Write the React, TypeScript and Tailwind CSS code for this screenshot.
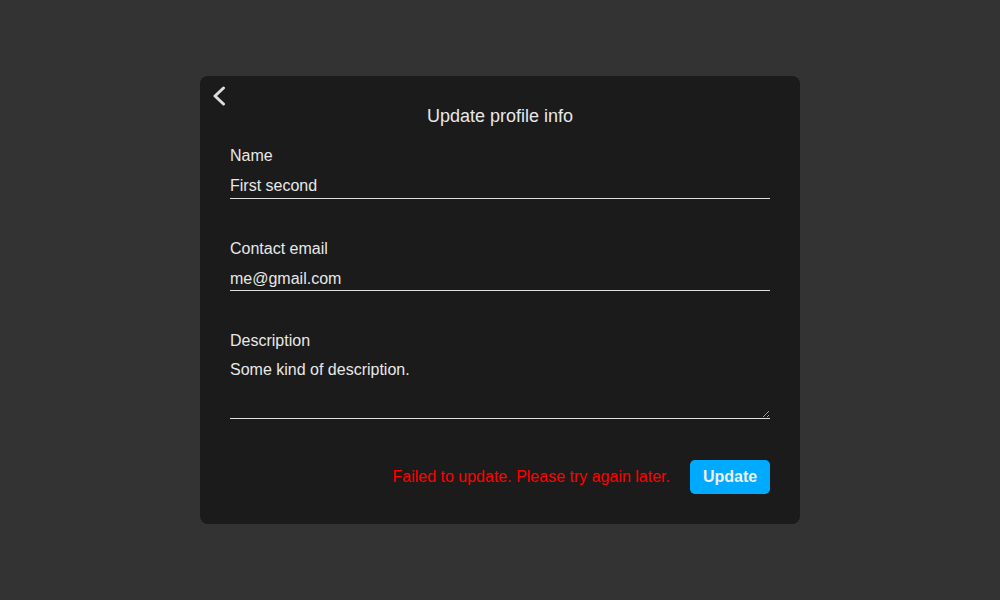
import React from "react";

export default function App() {
  return (
    <div
      className="w-[1000px] h-[600px] bg-[#333333] flex items-start justify-center pt-[76px]"
      style={{ fontFamily: '"Liberation Sans", Arial, sans-serif' }}
    >
      <div className="relative w-[600px] bg-[#1b1b1b] rounded-[8px] px-[30px] pt-[30px] pb-[30px] text-[#e8e8e8]">
        <button className="absolute left-[12px] top-[10px] w-[14px] h-[20px] flex items-center justify-center text-[#dddddd]">
          <svg width="14" height="20" viewBox="0 0 14 20" fill="none">
            <path d="M11.5 2 L3 10 L11.5 18" stroke="currentColor" strokeWidth="3" strokeLinecap="round" strokeLinejoin="round" />
          </svg>
        </button>
        <h1 className="text-center text-[18px] leading-[21px]">Update profile info</h1>

        <div className="mt-[20px] flex flex-col">
          <label className="text-[16px] leading-[18px]">Name</label>
          <input
            className="mt-[10px] h-[24px] pb-[2px] bg-transparent border-b border-[#e0e0e0] text-[16px] leading-[18px] outline-none text-[#e8e8e8]"
            defaultValue="First second"
          />
        </div>

        <div className="mt-[41px] flex flex-col">
          <label className="text-[16px] leading-[18px]">Contact email</label>
          <input
            className="mt-[9px] h-[24px] bg-transparent border-b border-[#e0e0e0] text-[16px] leading-[18px] outline-none text-[#e8e8e8]"
            defaultValue="me@gmail.com"
          />
        </div>

        <div className="mt-[41px] flex flex-col">
          <label className="text-[16px] leading-[18px]">Description</label>
          <textarea
            className="mt-[10px] h-[59px] pt-[1px] bg-transparent border-b border-[#e0e0e0] text-[16px] leading-[18px] outline-none text-[#e8e8e8] resize-y"
            defaultValue="Some kind of description."
          />
        </div>

        <div className="mt-[41px] flex items-center justify-end gap-[20px]">
          <span className="text-[16px] text-[#ff0000]">Failed to update. Please try again later.</span>
          <button className="w-[80px] h-[34px] rounded-[5px] bg-[#00aaff] text-[#f0f0f0] font-bold text-[16px]">
            Update
          </button>
        </div>
      </div>
    </div>
  );
}
